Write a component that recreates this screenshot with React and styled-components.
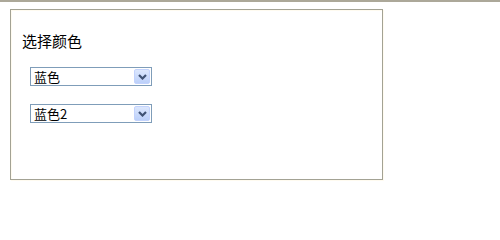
import React from 'react';
import styled, { createGlobalStyle } from 'styled-components';

const GlobalStyle = createGlobalStyle`
  html, body {
    margin: 0;
    background: #fff;
  }
  body {
    font-family: "Noto Sans CJK SC", "DejaVu Sans", sans-serif;
    color: #000;
  }
`;

const Page = styled.div`
  border-top: 2px solid #aca899;
  padding: 7px 10px;
`;

const GroupBox = styled.div`
  width: 373px;
  height: 171px;
  box-sizing: border-box;
  border: 1px solid #a3a294;
  box-shadow: 1px 1px 0 #fffbf0, inset 1px 1px 0 #fffbf0;
  padding: 21px 11px;
`;

const Title = styled.div`
  font-size: 15px;
  line-height: 20px;
  margin-bottom: 16px;
`;

const Fields = styled.div`
  display: flex;
  flex-direction: column;
  gap: 18px;
  padding-left: 8px;
`;

const SelectBox = styled.div`
  display: flex;
  align-items: center;
  justify-content: space-between;
  width: 122px;
  height: 19px;
  box-sizing: border-box;
  border: 1px solid #7f9db9;
  background: #fff;
  padding: 1px 1px 1px 3px;
`;

const Value = styled.span`
  font-size: 13px;
  line-height: 15px;
`;

const Arrow = styled.span`
  display: flex;
  align-items: center;
  justify-content: center;
  width: 16px;
  height: 15px;
  box-sizing: border-box;
  border: 1px solid #c3d3fd;
  border-radius: 2px;
  background: linear-gradient(#dce7fd, #bcd0fa);
`;

const Chevron = () => (
  <svg width="9" height="6" viewBox="0 0 9 6">
    <path d="M1 1 L4.5 4.5 L8 1" fill="none" stroke="#3f5274" strokeWidth="2.2" />
  </svg>
);

const Select = ({ value }) => (
  <SelectBox>
    <Value>{value}</Value>
    <Arrow>
      <Chevron />
    </Arrow>
  </SelectBox>
);

const App = () => (
  <>
    <GlobalStyle />
    <Page>
      <GroupBox>
        <Title>选择颜色</Title>
        <Fields>
          <Select value="蓝色" />
          <Select value="蓝色2" />
        </Fields>
      </GroupBox>
    </Page>
  </>
);

export default App;
